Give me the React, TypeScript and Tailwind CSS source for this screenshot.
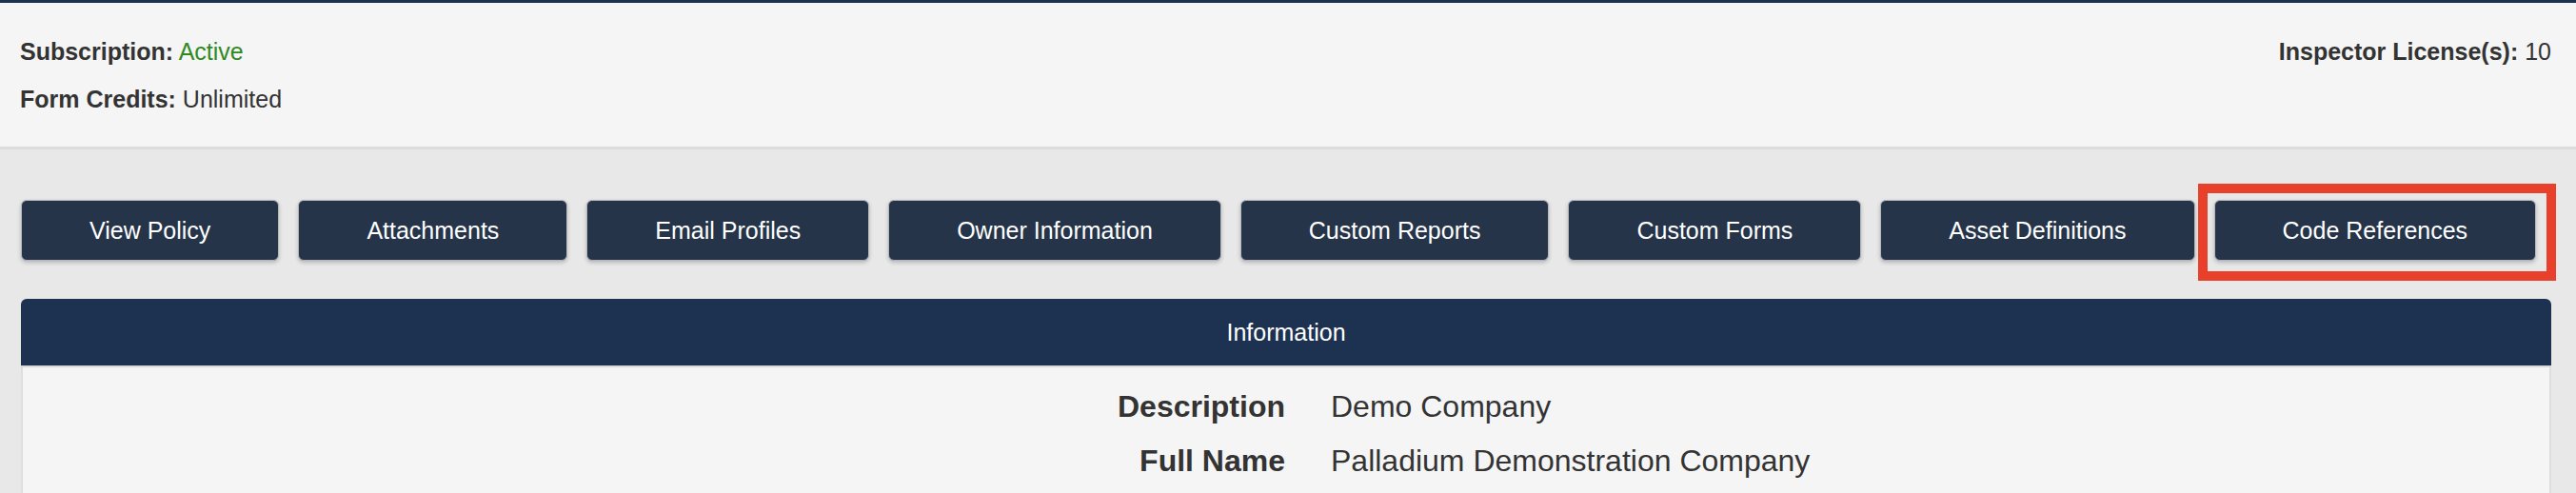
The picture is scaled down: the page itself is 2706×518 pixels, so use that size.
const buttons = [
  'View Policy',
  'Attachments',
  'Email Profiles',
  'Owner Information',
  'Custom Reports',
  'Custom Forms',
  'Asset Definitions',
  'Code References',
];

const info = [
  { label: 'Description', value: 'Demo Company' },
  { label: 'Full Name', value: 'Palladium Demonstration Company' },
];

export default function App() {
  return (
    <div className="w-[2706px] min-h-[518px] bg-[#e8e8e8] text-[#333] font-['Liberation_Sans',Arial,sans-serif]">
      <div className="h-[3px] bg-[#1d3250]" />

      {/* account summary */}
      <div className="flex justify-between bg-[#f5f5f5] border-b-[3px] border-[#dcdcdc] pl-[21px] pr-[26px] pt-[33px] pb-[32px] text-[25px] leading-[36px]">
        <div className="flex flex-col gap-[14px]">
          <p>
            <span className="font-bold">Subscription:</span>{' '}
            <span className="text-[#2f8a1f]">Active</span>
          </p>
          <p>
            <span className="font-bold">Form Credits:</span> Unlimited
          </p>
        </div>
        <p>
          <span className="font-bold">Inspector License(s):</span> 10
        </p>
      </div>

      {/* actions */}
      <div className="flex gap-[20px] pl-[22px] pr-[26px] pt-[53px]">
        {buttons.map(name => (
          <div key={name} className="relative">
            <button className="h-[64px] px-[71px] rounded-[6px] border border-[#b4b8bd] bg-[#253449] text-white text-[25px] leading-none shadow-[0_2px_4px_rgba(0,0,0,0.22)]">
              {name}
            </button>
            {name === 'Code References' && (
              <div className="pointer-events-none absolute -left-[17px] -top-[17px] -right-[21px] -bottom-[21px] border-[10px] border-[#e8402a]" />
            )}
          </div>
        ))}
      </div>

      {/* information panel */}
      <div className="ml-[22px] mr-[26px] mt-[40px]">
        <div className="h-[72px] pt-[2px] flex items-center justify-center rounded-t-[6px] bg-[#1d3250] text-white text-[25px] border-b-2 border-[#d9d9d9]">
          Information
        </div>
        <div className="bg-[#f5f5f5] border-x-2 border-[#dedede] pt-[13px] pb-[20px] text-[32px] leading-[57px]">
          {info.map(row => (
            <div key={row.label} className="grid grid-cols-2">
              <div className="text-right font-bold pr-[1px]">{row.label}</div>
              <div className="pl-[47px]">{row.value}</div>
            </div>
          ))}
        </div>
      </div>
    </div>
  );
}
